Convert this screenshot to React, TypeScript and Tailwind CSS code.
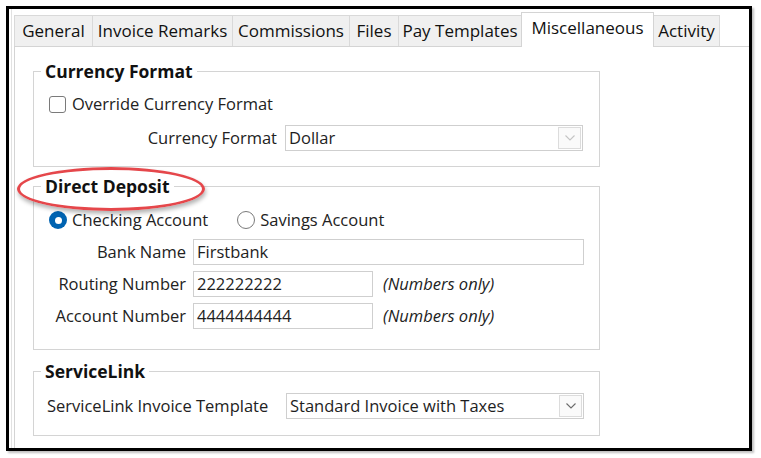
import React from 'react';

const tabs = [
    { label: 'General', w: 'w-[79px]' },
    { label: 'Invoice Remarks', w: 'w-[141px]' },
    { label: 'Commissions', w: 'w-[118px]' },
    { label: 'Files', w: 'w-[50px]' },
    { label: 'Pay Templates', w: 'w-[124px]' },
    { label: 'Miscellaneous', w: 'w-[133px]', active: true },
    { label: 'Activity', w: 'w-[67px]' },
];

const Chevron: React.FC<{ disabled?: boolean }> = ({ disabled }) => (
    <svg width="12" height="8" viewBox="0 0 12 8" fill="none">
        <path d="M1.5 1.5 L6 6 L10.5 1.5" stroke={disabled ? '#c4c4c4' : '#6b6b6b'} strokeWidth="1.1" />
    </svg>
);

const Select: React.FC<{ value: string; disabled?: boolean; className?: string }> = ({ value, disabled, className }) => (
    <div className={`h-[26px] border border-[#cfcfcf] bg-white flex items-center ${className ?? ''}`}>
        <span className="flex-1 pl-[3px] text-[16.5px] leading-[22px] text-[#1e1e1e] truncate">{value}</span>
        <div className="w-[23px] h-[22px] mr-[1px] border border-[#dcdcdc] bg-[#fafafa] flex items-center justify-center">
            <Chevron disabled={disabled} />
        </div>
    </div>
);

const Input: React.FC<{ value: string; className?: string }> = ({ value, className }) => (
    <div className={`h-[26px] border border-[#cfcfcf] bg-white flex items-center pl-[3px] text-[16.5px] leading-[22px] text-[#1e1e1e] ${className ?? ''}`}>
        {value}
    </div>
);

const Group: React.FC<{ title: string; className?: string; children: React.ReactNode }> = ({ title, className, children }) => (
    <div className={`relative ml-[18px] w-[567px] border border-[#d4d4d4] ${className ?? ''}`}>
        <span className="absolute left-[7px] -top-[13px] px-[4px] bg-white text-[17.5px] leading-[24px] font-bold text-[#111]">
            {title}
        </span>
        {children}
    </div>
);

const Label: React.FC<{ children: React.ReactNode; className?: string }> = ({ children, className }) => (
    <span className={`text-[16.5px] leading-[22px] text-[#222] whitespace-nowrap ${className ?? ''}`}>{children}</span>
);

export default function App() {
    return (
        <div className="relative w-[761px] h-[458px] bg-white overflow-hidden" style={{ fontFamily: '"Open Sans", "Noto Sans", sans-serif' }}>
            <div className="ml-[6px] mt-[6px] w-[746px] h-[445px] border-[3px] border-black shadow-[2px_2px_2px_rgba(0,0,0,0.25)] overflow-hidden">
                <div className="h-full ml-[2px] pl-[2px] border-l border-[#e2e2e2] flex flex-col">
                    {/* Tab strip */}
                    <div className="flex items-start h-[37px] pt-[6px]">
                        {tabs.map((t, i) =>
                            t.active ? (
                                <div
                                    key={t.label}
                                    className={`${t.w} relative z-10 h-[35px] -mt-[3px] bg-white border border-b-0 border-[#d4d4d4] -ml-px flex items-center justify-center text-[17px] text-[#111] pb-[4px] whitespace-nowrap`}
                                >
                                    {t.label}
                                </div>
                            ) : (
                                <div
                                    key={t.label}
                                    className={`${t.w} h-[31px] bg-[#f0f0f0] border border-b-0 border-[#d9d9d9] ${i === 0 ? '' : '-ml-px'} flex items-center justify-center text-[17px] text-[#111] whitespace-nowrap`}
                                >
                                    {t.label}
                                </div>
                            )
                        )}
                    </div>

                    {/* Panel */}
                    <div className="flex-1 border-l border-t border-[#d4d4d4] pt-[24px]">
                        <Group title="Currency Format" className="pt-[23px] pb-[15px]">
                            <div className="flex items-center h-[18px] ml-[15px]">
                                <div className="w-[17px] h-[17px] rounded-[3px] border border-[#7a7a7a] bg-white" />
                                <Label className="ml-[6px]">Override Currency Format</Label>
                            </div>
                            <div className="flex items-center mt-[12px]">
                                <Label className="w-[243px] text-right">Currency Format</Label>
                                <Select value="Dollar" disabled className="ml-[8px] w-[298px]" />
                            </div>
                        </Group>

                        <Group title="Direct Deposit" className="mt-[19px] pt-[24px] pb-[20px]">
                            <div className="flex items-center h-[18px] ml-[15px]">
                                <div className="w-[18px] h-[18px] rounded-full bg-[#0063b1] flex items-center justify-center">
                                    <div className="w-[7px] h-[7px] rounded-full bg-white" />
                                </div>
                                <Label className="ml-[5px]">Checking Account</Label>
                                <div className="ml-[29px] w-[18px] h-[18px] rounded-full border border-[#7a7a7a] bg-white" />
                                <Label className="ml-[5px]">Savings Account</Label>
                            </div>
                            <div className="flex items-center mt-[10px]">
                                <Label className="w-[152px] text-right">Bank Name</Label>
                                <Input value="Firstbank" className="ml-[7px] w-[391px]" />
                            </div>
                            <div className="flex items-center mt-[6px]">
                                <Label className="w-[152px] text-right">Routing Number</Label>
                                <Input value="222222222" className="ml-[7px] w-[180px]" />
                                <span className="ml-[10px] text-[16.5px] leading-[22px] italic text-[#222]">(Numbers only)</span>
                            </div>
                            <div className="flex items-center mt-[6px]">
                                <Label className="w-[152px] text-right">Account Number</Label>
                                <Input value="4444444444" className="ml-[7px] w-[180px]" />
                                <span className="ml-[10px] text-[16.5px] leading-[22px] italic text-[#222]">(Numbers only)</span>
                            </div>
                        </Group>

                        <Group title="ServiceLink" className="mt-[21px] pt-[21px] pb-[16px]">
                            <div className="flex items-center">
                                <Label className="ml-[13px] w-[228px]">ServiceLink Invoice Template</Label>
                                <Select value="Standard Invoice with Taxes" className="ml-[11px] w-[298px]" />
                            </div>
                        </Group>
                    </div>
                </div>
            </div>

            {/* Annotation ellipse */}
            <div className="absolute left-[17px] top-[167px] w-[188px] h-[44px] rounded-[50%] border-[3px] border-[#e5474b] shadow-[1px_3px_4px_rgba(0,0,0,0.3)]" />
        </div>
    );
}
